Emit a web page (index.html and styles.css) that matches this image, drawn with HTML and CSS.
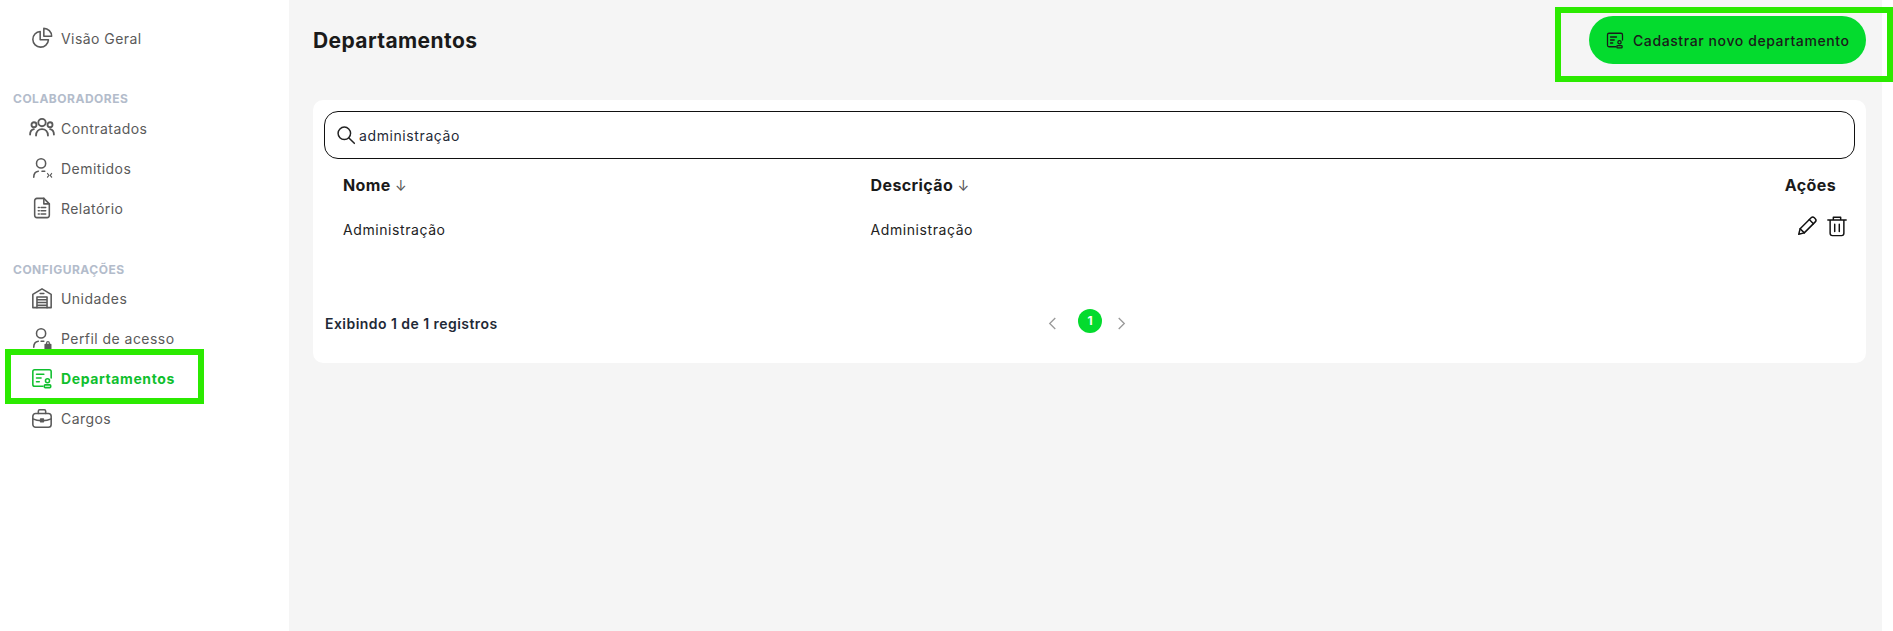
FILE: index.html
```html
<!DOCTYPE html>
<html lang="pt-BR">
<head>
    <meta charset="UTF-8">
    <meta name="viewport" content="width=device-width, initial-scale=1.0">
    <title>Departamentos</title>
    <link rel="stylesheet" href="styles.css">
</head>
<body>
    <aside class="sidebar">
        <a class="nav-item">
            <svg class="nav-icon" viewBox="0 0 24 24"><path d="M10 5a8.5 8.5 0 1 0 9 9H10z"/><path d="M14 1.5a8.5 8.5 0 0 1 8.5 8.5H14z"/></svg>
            Visão Geral
        </a>
        <div class="nav-label label-colab">COLABORADORES</div>
        <a class="nav-item">
            <svg class="nav-icon wide" viewBox="0 0 24 24"><circle cx="12" cy="7" r="3.4"/><circle cx="4.6" cy="9" r="2.3"/><circle cx="19.4" cy="9" r="2.3"/><path d="M6.5 19c0-3.5 2.3-6 5.5-6s5.5 2.5 5.5 6"/><path d="M1 18c0-2.5 1-4.5 3.5-5M23 18c0-2.5-1-4.5-3.5-5"/></svg>
            Contratados
        </a>
        <a class="nav-item">
            <svg class="nav-icon" viewBox="0 0 24 24"><circle cx="11" cy="7" r="5"/><path d="M3 22c0-3.5 2-6 5-6.5M12 15.5h3"/><path d="M18 18l1.5 2-1.5 2M22.5 18L21 20l1.5 2" stroke-width="1.3"/></svg>
            Demitidos
        </a>
        <a class="nav-item">
            <svg class="nav-icon" viewBox="0 0 24 24"><path d="M4 4a2.5 2.5 0 0 1 2.5-2.5H14L20 7.5V20a2.5 2.5 0 0 1-2.5 2.5h-11A2.5 2.5 0 0 1 4 20z"/><path d="M14 1.5v6h6"/><path d="M8 11.5h1M11 11.5h5M8 15h1M11 15h5M8 18.5h1M11 18.5h5"/></svg>
            Relatório
        </a>
        <div class="nav-label label-config">CONFIGURAÇÕES</div>
        <a class="nav-item">
            <svg class="nav-icon" viewBox="0 0 24 24"><path d="M2 22.5V8l10-6 10 6v14.5z"/><path d="M6.5 22.5V11h11v11.5M6.5 14h11M6.5 17h11M6.5 20h11M10 7h4"/></svg>
            Unidades
        </a>
        <a class="nav-item">
            <svg class="nav-icon" viewBox="0 0 24 24"><circle cx="11" cy="7" r="5"/><path d="M3 22c0-3.5 2-6 5-6.5M11 15.5h3"/><rect x="15.5" y="19" width="6" height="4.5" fill="currentColor"/><path d="M17 19v-1.5a1.5 1.5 0 0 1 3 0V19" stroke-width="1.3"/></svg>
            Perfil de acesso
        </a>
        <a class="nav-item active">
            <svg class="nav-icon" viewBox="0 0 24 24"><path d="M13 21H4a2 2 0 0 1-2-2V5a2 2 0 0 1 2-2h16a2 2 0 0 1 2 2v7"/><path d="M6 8h8M6 12h5M6 16h3"/><circle cx="18" cy="15" r="2.2"/><rect x="14.5" y="19.5" width="7" height="3" rx="1"/></svg>
            Departamentos
        </a>
        <a class="nav-item">
            <svg class="nav-icon" viewBox="0 0 24 24"><rect x="2" y="7" width="20" height="15" rx="3"/><path d="M8 7V4.5A1.5 1.5 0 0 1 9.5 3h5A1.5 1.5 0 0 1 16 4.5V7M2 13c3 1.5 6 2 10 2s7-.5 10-2"/><rect x="10.5" y="13" width="3" height="3" fill="currentColor"/></svg>
            Cargos
        </a>
        <div class="highlight highlight-nav"></div>
    </aside>

    <main class="content">
        <div class="page-head">
            <h1>Departamentos</h1>
            <button class="btn-new">
                <svg class="btn-icon" viewBox="0 0 24 24"><path d="M13 21H4a2 2 0 0 1-2-2V5a2 2 0 0 1 2-2h16a2 2 0 0 1 2 2v7"/><path d="M6 8h8M6 12h5M6 16h3"/><circle cx="18" cy="15" r="2.2"/><rect x="14.5" y="19.5" width="7" height="3" rx="1"/></svg>
                Cadastrar novo departamento
            </button>
        </div>

        <section class="card">
            <div class="search-bar">
                <svg class="search-icon" viewBox="0 0 24 24"><circle cx="10" cy="10" r="7.5"/><path d="M15.5 15.5L22 22"/></svg>
                <span>administração</span>
            </div>
            <div class="table-row table-head">
                <div>Nome <span class="sort">↓</span></div>
                <div>Descrição <span class="sort">↓</span></div>
                <div class="actions-col">Ações</div>
            </div>
            <div class="table-row table-body">
                <div>Administração</div>
                <div>Administração</div>
                <div class="actions-col row-actions">
                    <svg viewBox="0 0 24 24"><path d="M3 21l1.5-6L16.5 3a2.5 2.5 0 0 1 3.5 0l1 1a2.5 2.5 0 0 1 0 3.5L9 19.5z"/><path d="M14.5 5l4.5 4.5M4.5 15L9 19.5"/></svg>
                    <svg viewBox="0 0 24 24"><path d="M2 5.5h20M8 5.5V2.5h8v3M4.5 5.5V20a2.5 2.5 0 0 0 2.5 2.5h10a2.5 2.5 0 0 0 2.5-2.5V5.5"/><path d="M9.5 10v8M14.5 10v8"/></svg>
                </div>
            </div>
            <div class="table-foot">
                <div class="records">Exibindo 1 de 1 registros</div>
                <div class="pagination">
                    <svg class="chevron" viewBox="0 0 10 14"><path d="M8 1L2 7l6 6"/></svg>
                    <span class="page-num">1</span>
                    <svg class="chevron next" viewBox="0 0 10 14"><path d="M2 1l6 6-6 6"/></svg>
                </div>
            </div>
        </section>
    </main>
    <div class="highlight highlight-btn"></div>
</body>
</html>
```

FILE: styles.css
```css
* {
    margin: 0;
    padding: 0;
    box-sizing: border-box;
    font-family: Inter, "Open Sans", sans-serif;
}

html, body {
    height: 631px;
    overflow: hidden;
}

body {
    display: flex;
    background-color: #fff;
    color: #1a1a1a;
    position: relative;
}

.sidebar {
    position: relative;
    width: 289px;
    flex-shrink: 0;
    background-color: #fff;
    padding-top: 18px;
}

.nav-item {
    display: flex;
    align-items: center;
    gap: 8.5px;
    height: 40px;
    padding-left: 30.5px;
    font-size: 14px;
    letter-spacing: 0.45px;
    color: #5a5a5a;
}

.nav-item.active {
    color: #0fbf2e;
    font-weight: 700;
    letter-spacing: 0.6px;
}

.nav-icon {
    width: 22px;
    height: 22px;
    flex-shrink: 0;
    fill: none;
    stroke: currentColor;
    stroke-width: 1.7;
    stroke-linecap: round;
    stroke-linejoin: round;
}

.nav-icon.wide {
    width: 26px;
    height: 26px;
    margin-left: -2px;
    margin-right: -2px;
}

.nav-label {
    padding-left: 13px;
    font-size: 12px;
    font-weight: 700;
    letter-spacing: 0.5px;
    color: #b3bccb;
    height: 15px;
    line-height: 15px;
}

.label-colab {
    margin-top: 33px;
    margin-bottom: 2px;
}

.label-config {
    margin-top: 34px;
    margin-bottom: 1px;
}

.highlight {
    position: absolute;
    border: 6px solid #2bea00;
}

.highlight-nav {
    left: 5px;
    top: 349px;
    width: 199px;
    height: 55px;
}

.highlight-btn {
    left: 1555px;
    top: 7px;
    width: 338px;
    height: 75px;
}

.content {
    flex: 1;
    margin-right: 11px;
    background-color: #f5f5f5;
    padding: 16px 16px 0 24px;
}

.page-head {
    display: flex;
    justify-content: space-between;
    align-items: center;
    height: 48px;
    margin-bottom: 36px;
}

h1 {
    font-size: 21px;
    font-weight: 700;
    letter-spacing: 0.4px;
}

.btn-new {
    display: flex;
    align-items: center;
    gap: 9px;
    width: 277px;
    height: 48px;
    padding-left: 17px;
    border: none;
    border-radius: 24px;
    background-color: #04db2e;
    color: #1a1a1a;
    font-size: 14px;
    font-weight: 500;
    letter-spacing: 0.6px;
}

.btn-icon {
    width: 18px;
    height: 18px;
    fill: none;
    stroke: currentColor;
    stroke-width: 1.7;
    stroke-linecap: round;
    stroke-linejoin: round;
}

.card {
    height: 263px;
    background-color: #fff;
    border-radius: 10px;
    padding: 11px;
}

.search-bar {
    display: flex;
    align-items: center;
    gap: 3px;
    height: 48px;
    padding-left: 11px;
    border: 1.5px solid #111;
    border-radius: 14px;
    font-size: 14px;
    letter-spacing: 0.6px;
    color: #1f2a37;
}

.search-icon {
    width: 20px;
    height: 20px;
    fill: none;
    stroke: #222;
    stroke-width: 1.8;
    stroke-linecap: round;
}

.table-row {
    display: grid;
    grid-template-columns: 527.5px 1fr 120px;
    padding: 0 19px;
    align-items: center;
}

.table-head {
    height: 50px;
    padding-top: 1px;
    font-size: 16px;
    font-weight: 700;
    letter-spacing: 0.4px;
}

.sort {
    font-size: 14px;
    font-weight: 400;
    color: #555;
}

.table-body {
    height: 40px;
    font-size: 14px;
    letter-spacing: 0.58px;
    color: #222;
}

.actions-col {
    text-align: right;
}

.row-actions {
    display: flex;
    justify-content: flex-end;
    gap: 8px;
    margin-right: -12px;
    margin-top: -6px;
}

.row-actions svg {
    width: 22px;
    height: 22px;
    fill: none;
    stroke: #111;
    stroke-width: 1.6;
    stroke-linecap: round;
    stroke-linejoin: round;
}

.table-foot {
    display: grid;
    grid-template-columns: 722px auto;
    align-items: center;
    margin-top: 60px;
    padding-left: 1px;
}

.records {
    font-size: 14px;
    font-weight: 600;
    letter-spacing: 0.45px;
    color: #1f2a37;
    margin-top: 4px;
}

.pagination {
    display: flex;
    align-items: center;
    gap: 20px;
}

.chevron {
    width: 11px;
    height: 13px;
    margin-top: 4px;
    fill: none;
    stroke: #999;
    stroke-width: 1.4;
}

.chevron.next {
    margin-left: -6px;
}

.page-num {
    width: 24px;
    height: 24px;
    border-radius: 50%;
    background-color: #04db2e;
    color: #fff;
    font-size: 12px;
    font-weight: 700;
    text-align: center;
    line-height: 24px;
}
```
